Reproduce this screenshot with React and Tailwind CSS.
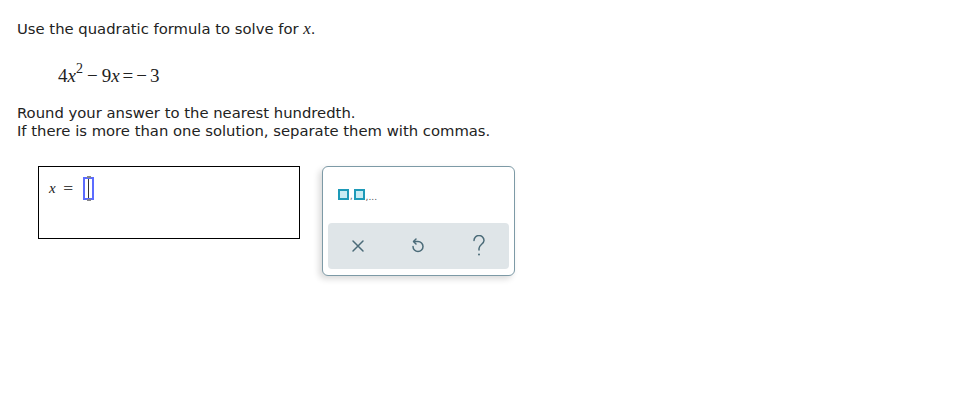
import React from "react";

export default function App() {
  return (
    <div className="w-[959px] h-[413px] bg-white text-[#222] relative" style={{ fontFamily: '"DejaVu Sans", Verdana, sans-serif' }}>
      <div className="pt-[19px] pl-[17px]">
        <div className="text-[14.8px] leading-[20px]">
          Use the quadratic formula to solve for{" "}
          <span className="italic text-[17px]" style={{ fontFamily: '"Liberation Serif", serif' }}>x</span>.
        </div>
        <div className="pl-[41px] mt-[25px] text-[19px] leading-[24px]" style={{ fontFamily: '"Liberation Serif", serif' }}>
          4<span className="italic">x</span>
          <sup className="text-[14px] top-[-9px]">2</sup>
          <span className="mx-[4px]">−</span>9<span className="italic">x</span>
          <span className="mx-[3px]">=</span>
          <span className="mr-[3px]">−</span>3
        </div>
        <div className="mt-[16px] text-[14.8px] leading-[18px]">
          <div>Round your answer to the nearest hundredth.</div>
          <div>If there is more than one solution, separate them with commas.</div>
        </div>
        <div className="mt-[26px] ml-[21px] flex gap-[22px]">
          <div className="w-[262px] h-[73px] border border-black px-[10px] pt-[9px]">
            <div className="flex items-center h-[24px]">
              <span className="italic text-[15px]" style={{ fontFamily: '"Liberation Serif", serif' }}>x</span>
              <span className="ml-[7px] text-[13px] text-[#444]">=</span>
              <div className="ml-[9px] relative w-[11px] h-[23px] border-2 border-[#5c6cff] flex justify-center">
                <div className="w-[1px] h-full bg-[#333]" />
                <div className="absolute -top-[3px] left-[2px] w-[4px] h-[2px] bg-[#888]" />
                <div className="absolute -bottom-[3px] left-[2px] w-[4px] h-[2px] bg-[#888]" />
              </div>
            </div>
          </div>
          <div className="w-[193px] h-[110px] border border-[#7d9aa6] rounded-[6px] bg-white shadow-[-3px_3px_6px_rgba(0,0,0,0.15)] flex flex-col">
            <div className="h-[56px] pl-[15px] pt-[22px]">
              <div className="flex items-end gap-[1px]">
                <div className="w-[11px] h-[11px] border-2 border-[#1d9ab8] bg-[#c8ecf3]" />
                <span className="text-[8px] leading-[6px] text-[#555]">,</span>
                <div className="w-[11px] h-[11px] border-2 border-[#1d9ab8] bg-[#c8ecf3]" />
                <span className="text-[9px] leading-[6px] text-[#555]">,...</span>
              </div>
            </div>
            <div className="mx-[5px] h-[46px] bg-[#dfe5e8] rounded-[4px] grid grid-cols-3 items-center justify-items-center text-[#4b6b78]">
              <svg width="14" height="14" viewBox="0 0 14 14">
                <path d="M2 2L12 12M12 2L2 12" stroke="currentColor" strokeWidth="1.5" strokeLinecap="round" />
              </svg>
              <svg width="16" height="18" viewBox="0 0 16 18">
                <path d="M6 2L3.5 4.5L6 7" stroke="currentColor" strokeWidth="1.5" fill="none" strokeLinecap="round" strokeLinejoin="round" />
                <path d="M4 4.5H8A5 5 0 1 1 3 9.5" stroke="currentColor" strokeWidth="1.5" fill="none" strokeLinecap="round" />
              </svg>
              <svg width="14" height="22" viewBox="0 0 14 22">
                <path d="M2 5.5A5 5 0 0 1 12 5.5C12 9 7 9.5 7 13.5V15" stroke="currentColor" strokeWidth="1.5" fill="none" strokeLinecap="round" />
                <circle cx="7" cy="19.5" r="1" fill="currentColor" />
              </svg>
            </div>
          </div>
        </div>
      </div>
    </div>
  );
}
